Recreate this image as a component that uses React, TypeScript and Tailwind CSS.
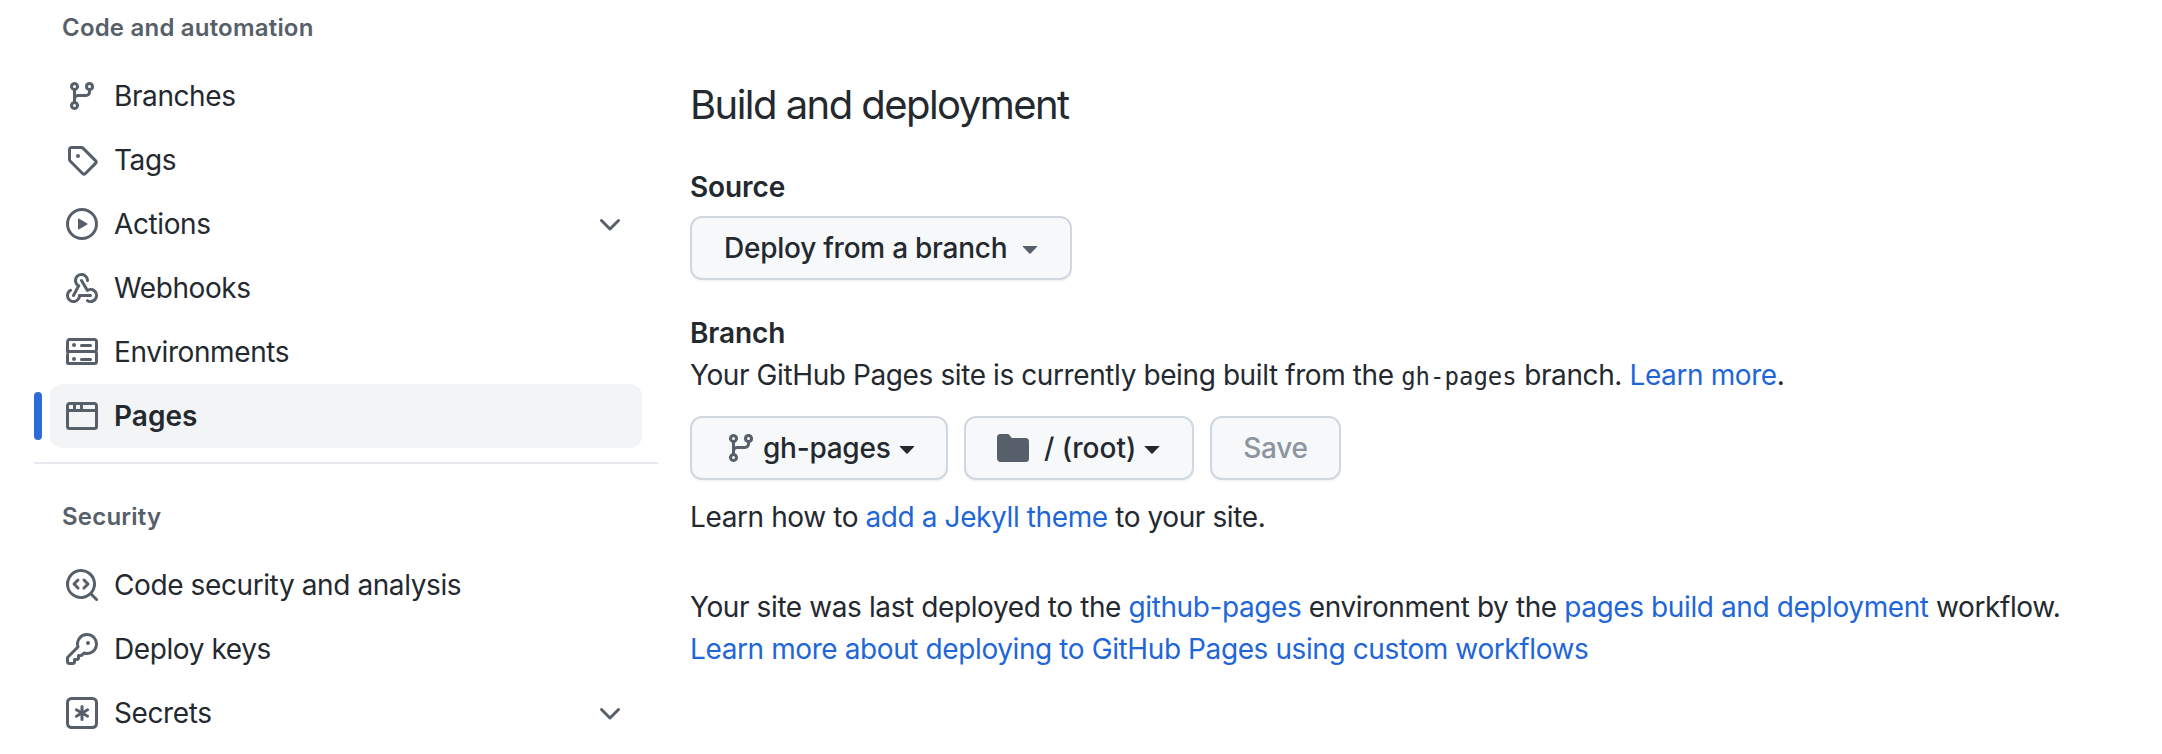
import type { ReactNode } from "react";

// 16px octicons, the packaged ones are the thinner 24px cut
const Octicon = ({ d, className }: { d: string | string[]; className?: string }) => (
  <svg viewBox="0 0 16 16" fill="currentColor" className={className}>
    {(Array.isArray(d) ? d : [d]).map(p => (
      <path key={p} d={p} />
    ))}
  </svg>
);

const icons = {
  branch:
    "M9.5 3.25a2.25 2.25 0 1 1 3 2.122V6A2.5 2.5 0 0 1 10 8.5H6a1 1 0 0 0-1 1v1.128a2.251 2.251 0 1 1-1.5 0V5.372a2.25 2.25 0 1 1 1.5 0v1.836A2.493 2.493 0 0 1 6 7h4a1 1 0 0 0 1-1v-.628A2.25 2.25 0 0 1 9.5 3.25Zm-6 0a.75.75 0 1 0 1.5 0 .75.75 0 0 0-1.5 0Zm8.25-.75a.75.75 0 1 0 0 1.5.75.75 0 0 0 0-1.5ZM4.25 12a.75.75 0 1 0 0 1.5.75.75 0 0 0 0-1.5Z",
  tag: "M1 7.775V2.75C1 1.784 1.784 1 2.75 1h5.025c.464 0 .91.184 1.238.513l6.25 6.25a1.75 1.75 0 0 1 0 2.474l-5.026 5.026a1.75 1.75 0 0 1-2.474 0l-6.25-6.25A1.75 1.75 0 0 1 1 7.775Zm1.5 0c0 .066.026.13.073.177l6.25 6.25a.25.25 0 0 0 .354 0l5.025-5.025a.25.25 0 0 0 0-.354l-6.25-6.25a.25.25 0 0 0-.177-.073H2.75a.25.25 0 0 0-.25.25ZM6 5a1 1 0 1 1 0 2 1 1 0 0 1 0-2Z",
  play: "M8 0a8 8 0 1 1 0 16A8 8 0 0 1 8 0ZM1.5 8a6.5 6.5 0 1 0 13 0 6.5 6.5 0 0 0-13 0Zm4.879-2.773 4.264 2.559a.25.25 0 0 1 0 .428l-4.264 2.559A.25.25 0 0 1 6 10.559V5.442a.25.25 0 0 1 .379-.215Z",
  webhook: [
    "M5.5 4.25a2.25 2.25 0 0 1 4.5 0 .75.75 0 0 0 1.5 0 3.75 3.75 0 1 0-6.14 2.889l-2.272 4.258a.75.75 0 0 0 1.324.706L7 7.25a.75.75 0 0 0-.309-1.015A2.25 2.25 0 0 1 5.5 4.25Z",
    "M7.364 3.607a.75.75 0 0 1 1.03.257l2.608 4.349a3.75 3.75 0 1 1-.628 6.785.75.75 0 0 1 .752-1.299 2.25 2.25 0 1 0-.033-3.88.75.75 0 0 1-1.03-.256L7.107 4.636a.75.75 0 0 1 .257-1.03Z",
    "M2.9 8.776A.75.75 0 0 1 2.625 9.8 2.25 2.25 0 1 0 6 11.75a.75.75 0 0 1 .75-.751h5.5a.75.75 0 0 1 0 1.5H7.425a3.751 3.751 0 1 1-5.55-3.998.75.75 0 0 1 1.024.274Z",
  ],
  server:
    "M1.75 1h12.5c.966 0 1.75.784 1.75 1.75v4c0 .372-.116.717-.314 1 .198.283.314.628.314 1v4a1.75 1.75 0 0 1-1.75 1.75H1.75A1.75 1.75 0 0 1 0 13.75v-4c0-.372.116-.717.314-1a1.739 1.739 0 0 1-.314-1v-4C0 1.784.784 1 1.75 1ZM1.5 2.75v4c0 .138.112.25.25.25h12.5a.25.25 0 0 0 .25-.25v-4a.25.25 0 0 0-.25-.25H1.75a.25.25 0 0 0-.25.25Zm.25 5.75a.25.25 0 0 0-.25.25v4c0 .138.112.25.25.25h12.5a.25.25 0 0 0 .25-.25v-4a.25.25 0 0 0-.25-.25ZM7 4.75A.75.75 0 0 1 7.75 4h4.5a.75.75 0 0 1 0 1.5h-4.5A.75.75 0 0 1 7 4.75Zm0 7a.75.75 0 0 1 .75-.75h4.5a.75.75 0 0 1 0 1.5h-4.5a.75.75 0 0 1-.75-.75ZM4 5.5a1 1 0 1 1 0-2 1 1 0 0 1 0 2Zm0 7a1 1 0 1 1 0-2 1 1 0 0 1 0 2Z",
  browser:
    "M0 2.75C0 1.784.784 1 1.75 1h12.5c.966 0 1.75.784 1.75 1.75v10.5A1.75 1.75 0 0 1 14.25 15H1.75A1.75 1.75 0 0 1 0 13.25ZM14.5 6h-13v7.25c0 .138.112.25.25.25h12.5a.25.25 0 0 0 .25-.25Zm-6-3.5v2h6V2.75a.25.25 0 0 0-.25-.25ZM5 2.5v2h2v-2Zm-3.25 0a.25.25 0 0 0-.25.25V4.5h2v-2Z",
  codescan: [
    "M8.47 4.97a.75.75 0 0 0 0 1.06L9.94 7.5 8.47 8.97a.75.75 0 1 0 1.06 1.06l2-2a.75.75 0 0 0 0-1.06l-2-2a.75.75 0 0 0-1.06 0ZM6.53 6.03a.75.75 0 0 0-1.06-1.06l-2 2a.75.75 0 0 0 0 1.06l2 2a.75.75 0 1 0 1.06-1.06L5.06 7.5l1.47-1.47Z",
    "M12.246 13.307a7.501 7.501 0 1 1 1.06-1.06l2.474 2.473a.749.749 0 0 1-.326 1.275.749.749 0 0 1-.734-.215ZM1.5 7.5a6.002 6.002 0 0 0 3.608 5.504 6.002 6.002 0 0 0 6.486-1.117.75.75 0 0 1 .292-.293A6 6 0 1 0 1.5 7.5Z",
  ],
  key: "M10.5 0a5.499 5.499 0 1 1-1.288 10.848l-.932.932a.749.749 0 0 1-.53.22H7v.75a.749.749 0 0 1-.22.53l-.5.5a.749.749 0 0 1-.53.22H5v.75a.749.749 0 0 1-.22.53l-.5.5a.749.749 0 0 1-.53.22h-2A1.75 1.75 0 0 1 0 14.25v-2c0-.199.079-.389.22-.53l4.932-4.932A5.5 5.5 0 0 1 10.5 0Zm-4 5.5c-.001.431.069.86.205 1.269a.75.75 0 0 1-.181.768L1.5 12.56v1.69c0 .138.112.25.25.25h1.69l.06-.06v-1.19a.75.75 0 0 1 .75-.75h1.19l.06-.06v-1.19a.75.75 0 0 1 .75-.75h1.19l1.023-1.025a.75.75 0 0 1 .768-.18A4 4 0 1 0 6.5 5.5ZM11 6a1 1 0 1 1 0-2 1 1 0 0 1 0 2Z",
  asterisk: [
    "M0 2.75A2.75 2.75 0 0 1 2.75 0h10.5A2.75 2.75 0 0 1 16 2.75v10.5A2.75 2.75 0 0 1 13.25 16H2.75A2.75 2.75 0 0 1 0 13.25ZM2.75 1.5c-.69 0-1.25.56-1.25 1.25v10.5c0 .69.56 1.25 1.25 1.25h10.5c.69 0 1.25-.56 1.25-1.25V2.75c0-.69-.56-1.25-1.25-1.25Z",
    "M8 4a.75.75 0 0 1 .75.75V6.7l1.69-.975a.75.75 0 0 1 .75 1.3L9.5 8l1.69.975a.75.75 0 0 1-.75 1.3L8.75 9.3v1.95a.75.75 0 0 1-1.5 0V9.3l-1.69.975a.75.75 0 0 1-.75-1.3L6.5 8l-1.69-.975a.75.75 0 0 1 .75-1.3L7.25 6.7V4.75A.75.75 0 0 1 8 4Z",
  ],
  chevron:
    "M12.78 5.22a.749.749 0 0 1 0 1.06l-4.25 4.25a.749.749 0 0 1-1.06 0L3.22 6.28a.749.749 0 1 1 1.06-1.06L8 8.939l3.72-3.719a.749.749 0 0 1 1.06 0Z",
  caret:
    "m4.427 7.427 3.396 3.396a.25.25 0 0 0 .354 0l3.396-3.396A.25.25 0 0 0 11.396 7H4.604a.25.25 0 0 0-.177.427Z",
  folder:
    "M1.75 1A1.75 1.75 0 0 0 0 2.75v10.5C0 14.216.784 15 1.75 15h12.5A1.75 1.75 0 0 0 16 13.25v-8.5A1.75 1.75 0 0 0 14.25 3H7.5a.25.25 0 0 1-.2-.1l-.9-1.2C6.07 1.26 5.55 1 5 1H1.75Z",
};

interface NavItemProps {
  icon: string | string[];
  label: string;
  active?: boolean;
  expandable?: boolean;
}

const NavItem = ({ icon, label, active, expandable }: NavItemProps) => (
  <div className={`relative ml-4 flex h-16 w-[592px] items-center rounded-xl pl-4 pr-4 ${active ? "bg-[#f3f4f6]" : ""}`}>
    {active && <span className="absolute -left-4 top-2 h-12 w-2 rounded-full bg-[#2b6cd8]" />}
    <Octicon d={icon} className="h-8 w-8 shrink-0 text-[#57606a]" />
    <span className={`ml-4 flex-1 text-[28px] text-[#24292f] ${active ? "font-semibold" : "tracking-[-0.4px]"}`}>{label}</span>
    {expandable && <Octicon d={icons.chevron} className="mt-[2px] h-8 w-8 text-[#57606a]" />}
  </div>
);

const SectionTitle = ({ children }: { children: ReactNode }) => (
  <h3 className="pl-7 text-[24px] font-semibold leading-9 tracking-[0.2px] text-[#57606a]">{children}</h3>
);

const Btn = ({ children, className = "" }: { children: ReactNode; className?: string }) => (
  <button className={`flex h-16 items-center rounded-xl border-2 border-[#d0d7de] bg-[#f6f8fa] text-[28px] font-medium tracking-[-0.25px] shadow-[0_2px_0_rgba(31,35,40,0.04)] ${className}`}>
    {children}
  </button>
);

const A = ({ children }: { children: ReactNode }) => <a className="text-[#1f66d8]">{children}</a>;

export default function App() {
  return (
    <div className="flex h-[754px] w-[2162px] overflow-hidden bg-white font-['Inter','Liberation_Sans',sans-serif] text-[#24292f]">
      <aside className="ml-[34px] w-[624px] shrink-0 pt-[10px]">
        <SectionTitle>Code and automation</SectionTitle>
        <nav className="mt-[18px]">
          <NavItem icon={icons.branch} label="Branches" />
          <NavItem icon={icons.tag} label="Tags" />
          <NavItem icon={icons.play} label="Actions" expandable />
          <NavItem icon={icons.webhook} label="Webhooks" />
          <NavItem icon={icons.server} label="Environments" />
          <NavItem icon={icons.browser} label="Pages" active />
        </nav>
        <div className="mt-[14px] h-[2px] bg-[#e6e9ed]" />
        <div className="mt-[35px]">
          <SectionTitle>Security</SectionTitle>
        </div>
        <nav className="mt-[18px]">
          <NavItem icon={icons.codescan} label="Code security and analysis" />
          <NavItem icon={icons.key} label="Deploy keys" />
          <NavItem icon={icons.asterisk} label="Secrets" expandable />
        </nav>
      </aside>

      <main className="ml-8 flex-1 pt-[80px] text-[28px] leading-[42px] tracking-[-0.4px]">
        <h2 className="text-[40px] font-normal leading-[50px] tracking-[-1.55px]">Build and deployment</h2>
        <div className="mt-[36px] font-semibold tracking-[-0.1px]">Source</div>
        <Btn className="mt-2 w-[382px] pl-[32px] text-[#24292f]">
          Deploy from a branch
          <Octicon d={icons.caret} className="ml-[7px] h-8 w-8 text-[#57606a]" />
        </Btn>
        <div className="mt-[32px] font-semibold tracking-[-0.1px]">Branch</div>
        <p>
          Your GitHub Pages site is currently being built from the{" "}
          <code className="font-['DejaVu_Sans_Mono',monospace] text-[24px] tracking-normal">gh-pages</code> branch.{" "}
          <A>Learn more</A>.
        </p>
        <div className="mt-[18px] flex gap-4">
          <Btn className="w-[258px] pl-[33px] text-[#24292f]">
            <Octicon d={icons.branch} className="h-8 w-8 text-[#57606a]" />
            <span className="ml-[6px]">gh-pages</span>
            <Octicon d={icons.caret} className="h-8 w-8 text-[#24292f]" />
          </Btn>
          <Btn className="w-[230px] pl-[31px] text-[#24292f]">
            <Octicon d={icons.folder} className="h-8 w-8 text-[#57606a]" />
            <span className="ml-[15px] tracking-normal">/ (root)</span>
            <Octicon d={icons.caret} className="h-8 w-8 text-[#24292f]" />
          </Btn>
          <Btn className="w-[131px] justify-center text-[#8c959f]">Save</Btn>
        </div>
        <p className="mt-[16px]">
          Learn how to <A>add a Jekyll theme</A> to your site.
        </p>
        <p className="mt-[48px]">
          Your site was last deployed to the <A>github-pages</A> environment by the{" "}
          <A>pages build and deployment</A> workflow.
        </p>
        <p>
          <A>Learn more about deploying to GitHub Pages using custom workflows</A>
        </p>
      </main>
    </div>
  );
}
